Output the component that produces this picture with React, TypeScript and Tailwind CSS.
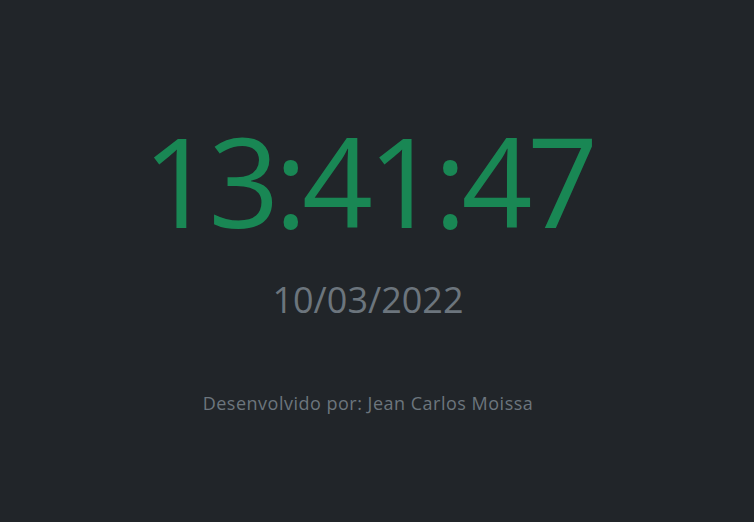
export default function App() {
  return (
    <div
      className="w-full min-h-[522px] bg-[#212529] flex flex-col items-center pt-[118px] pr-[18px]"
      style={{ fontFamily: '"Open Sans", "Noto Sans", sans-serif' }}
    >
      <div className="text-[124px] leading-none text-[#198754] tracking-[-5px]">13:41:47</div>
      <div className="mt-[40px] text-[36px] leading-none text-[#6c757d]">10/03/2022</div>
      <div className="mt-[76px] text-[18px] leading-none text-[#6c757d] tracking-[0.5px]">Desenvolvido por: Jean Carlos Moissa</div>
    </div>
  );
}
